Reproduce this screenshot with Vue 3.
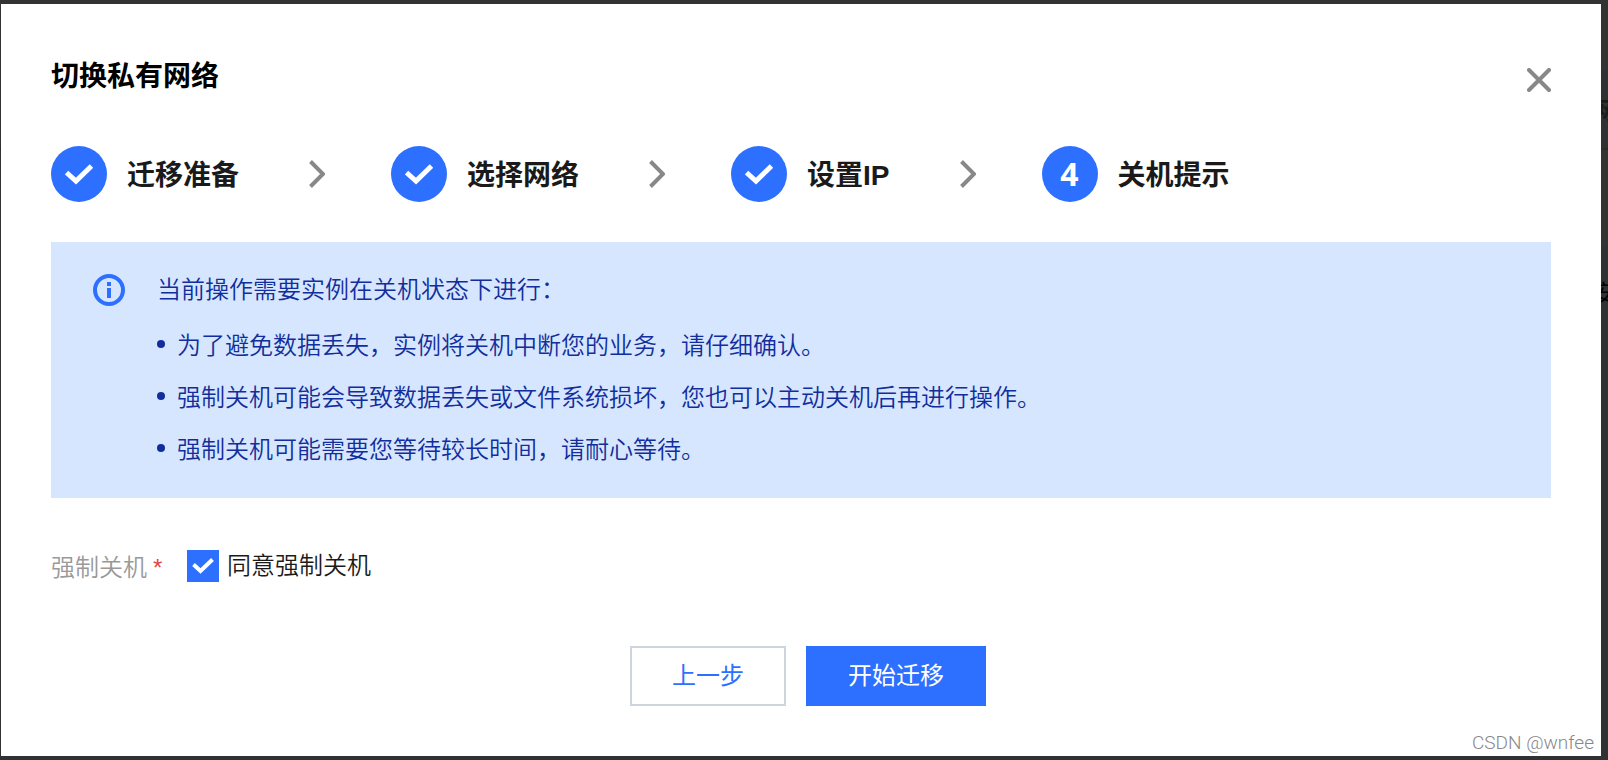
<script setup>
import { ref } from 'vue'

const steps = [
  { title: '迁移准备', done: true },
  { title: '选择网络', done: true },
  { title: '设置IP', done: true },
  { title: '关机提示', done: false },
]
const notes = [
  '为了避免数据丢失，实例将关机中断您的业务，请仔细确认。',
  '强制关机可能会导致数据丢失或文件系统损坏，您也可以主动关机后再进行操作。',
  '强制关机可能需要您等待较长时间，请耐心等待。',
]
const agreed = ref(true)
</script>

<template>
  <div class="page">
    <div class="backdrop" aria-hidden="true">
      <div class="band band-top"></div>
      <div class="band band-head"><span>网</span></div>
      <div class="band band-gap"></div>
      <div class="band band-body"><span>安</span></div>
      <div class="band band-rest"></div>
    </div>
    <section class="dialog" role="dialog" aria-labelledby="dialog-title">
      <header class="head">
        <h1 id="dialog-title">切换私有网络</h1>
        <button class="close" type="button" aria-label="关闭">
          <svg width="24" height="24" viewBox="0 0 24 24">
            <path d="M2 2L22 22M22 2L2 22" fill="none" stroke="#888" stroke-width="4" stroke-linecap="round" />
          </svg>
        </button>
      </header>

      <ol class="steps">
        <li v-for="(step, i) in steps" :key="step.title" class="step">
          <span class="badge">
            <svg v-if="step.done" width="28" height="22" viewBox="0 0 28 22">
              <path d="M1.500 9.500L11 18L26.500 3" fill="none" stroke="#fff" stroke-width="5" />
            </svg>
            <template v-else>{{ i + 1 }}</template>
          </span>
          <span class="step-title">{{ step.title }}</span>
          <svg v-if="i < steps.length - 1" class="arrow" width="16" height="28" viewBox="0 0 16 28">
            <path d="M1.500 1.500L14 14L1.500 26.500" fill="none" stroke="#888" stroke-width="4" />
          </svg>
        </li>
      </ol>

      <div class="notice">
        <svg class="info" width="32" height="32" viewBox="0 0 32 32">
          <circle cx="16" cy="16" r="14" fill="none" stroke="#2d6fff" stroke-width="4" />
          <path d="M14 8h4v4h-4zM14 14h4v10h-4z" fill="#2d6fff" />
        </svg>
        <div class="notice-body">
          <p>当前操作需要实例在关机状态下进行：</p>
          <ul>
            <li v-for="note in notes" :key="note">{{ note }}</li>
          </ul>
        </div>
      </div>

      <div class="field">
        <span id="force-label" class="field-label">强制关机<span class="star">*</span></span>
        <label class="check" for="force">
          <span class="box">
            <input id="force" v-model="agreed" type="checkbox" aria-describedby="force-label" />
            <svg v-if="agreed" width="22" height="16" viewBox="0 0 22 16">
              <path d="M1.500 6.500L8.500 13L20.500 1.500" fill="none" stroke="#fff" stroke-width="4" />
            </svg>
          </span>
          同意强制关机
        </label>
      </div>

      <footer class="actions">
        <button class="btn" type="button">上一步</button>
        <button class="btn primary" type="button">开始迁移</button>
      </footer>
    </section>
    <span class="mark">CSDN @wnfee</span>
  </div>
</template>

<style>
body {
  background: #333437;
}
</style>

<style scoped>
* {
  box-sizing: border-box;
}
.page {
  position: relative;
  min-height: 100vh;
  padding: 4px 7px 4px 1px;
  overflow: hidden;
  font-family: "Liberation Sans", "Noto Sans CJK SC", sans-serif;
  font-size: 24px;
  font-weight: 350;
  line-height: 36px;
  color: #1a1a1a;
}
.backdrop {
  position: absolute;
  inset: 0;
  display: flex;
  flex-direction: column;
  background: #333;
}
.band {
  display: flex;
  justify-content: flex-end;
  align-items: center;
  overflow: hidden;
}
.band span {
  flex: none;
  width: 16px;
  font-size: 24px;
}
.band-top {
  height: 70px;
}
.band-head {
  height: 80px;
  padding-top: 4px;
  background: #303132;
  border-bottom: 2px solid #2a2b2c;
  font-weight: 700;
}
.band-gap {
  height: 95px;
}
.band-body {
  height: 281px;
  padding-bottom: 184px;
  background: #303132;
  color: #000;
}
.band-rest {
  flex: 1;
  background: #303132;
}
.dialog {
  position: relative;
  min-height: calc(100vh - 8px);
  padding: 50px;
  background: #fff;
}
.head {
  display: flex;
  justify-content: space-between;
  align-items: center;
  height: 44px;
}
h1 {
  margin: 0;
  padding-top: 2px;
  font-size: 28px;
  line-height: 40px;
  color: #000;
}
.close {
  display: flex;
  margin-top: 8px;
  padding: 0;
  border: 0;
  background: none;
}
.steps {
  display: flex;
  gap: 66px;
  margin: 48px 0 40px;
  padding: 0;
  list-style: none;
}
.step {
  display: flex;
  align-items: center;
  font-size: 28px;
  font-weight: 700;
}
.step-title {
  padding-top: 4px;
}
.badge {
  display: flex;
  justify-content: center;
  align-items: center;
  width: 56px;
  height: 56px;
  margin-right: 20px;
  border-radius: 50%;
  background: #2d6fff;
  font-family: "Open Sans", sans-serif;
  font-size: 32px;
  color: #fff;
}
.arrow {
  margin-left: 70px;
}
.notice {
  display: flex;
  gap: 32px;
  padding: 30px 42px;
  background: #d6e6ff;
  color: #112e9c;
}
.info {
  flex: none;
  margin-top: 2px;
}
.notice p {
  margin: 0 0 20px;
}
.notice ul {
  display: grid;
  gap: 16px;
  margin: 0;
  padding: 0;
  list-style: none;
}
.notice li {
  display: flex;
  align-items: center;
  gap: 12px;
}
.notice li::before {
  content: "";
  flex: none;
  width: 8px;
  height: 8px;
  margin-bottom: 4px;
  border-radius: 50%;
  background: #112e9c;
}
.field {
  display: flex;
  align-items: center;
  height: 36px;
  margin-top: 50px;
}
.field-label {
  width: 136px;
  padding-top: 4px;
  color: #999;
}
.star {
  margin-left: 6px;
  font-size: 24px;
  line-height: 1;
  color: #e54545;
}
.check {
  display: flex;
  align-items: center;
  gap: 8px;
}
.box {
  display: grid;
  place-items: center;
  width: 32px;
  height: 32px;
}
.box > * {
  grid-area: 1 / 1;
}
.box input {
  appearance: none;
  width: 32px;
  height: 32px;
  margin: 0;
  border: 2px solid #2d6fff;
}
.box input:checked {
  background: #2d6fff;
}
.box svg {
  z-index: 1;
  pointer-events: none;
}
.actions {
  display: flex;
  justify-content: center;
  gap: 20px;
  margin-top: 62px;
  padding-left: 14px;
}
.btn {
  height: 60px;
  padding: 0 40px;
  border: 2px solid #cfd5de;
  background: #fff;
  font: inherit;
  font-weight: 400;
  color: #2d6fff;
}
.btn.primary {
  border-color: #2d6fff;
  background: #2d6fff;
  color: #fff;
}
.mark {
  position: absolute;
  right: 14px;
  bottom: 3px;
  font-family: Roboto, sans-serif;
  font-size: 19px;
  line-height: 28px;
  color: #888;
}
</style>
